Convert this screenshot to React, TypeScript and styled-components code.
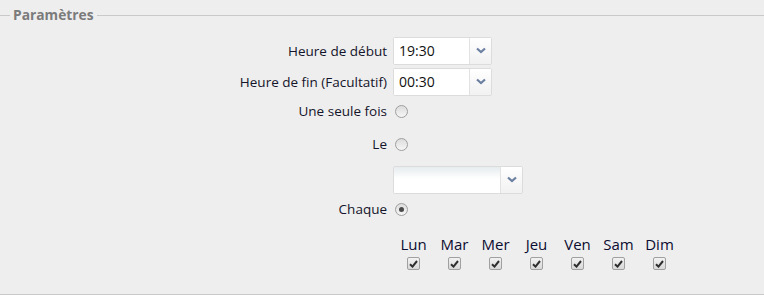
import styled, { createGlobalStyle } from "styled-components";

const GlobalStyle = createGlobalStyle`
  html, body {
    margin: 0;
    padding: 0;
    background: #eeeeee;
    font-family: "Open Sans", "Liberation Sans", Arial, sans-serif;
  }
`;

const days = ["Lun", "Mar", "Mer", "Jeu", "Ven", "Sam", "Dim"];

function Chevron() {
  return (
    <svg width="10" height="7" viewBox="0 0 10 7">
      <path d="M1 1.5 L5 5 L9 1.5" fill="none" stroke="#6b7fa0" strokeWidth="2.2" />
    </svg>
  );
}

function Check() {
  return (
    <svg width="9" height="8" viewBox="0 0 9 8">
      <path d="M1 4.2 L3.5 6.6 L8 1" fill="none" stroke="#2e2e2e" strokeWidth="2" />
    </svg>
  );
}

function Combo(prop: { value?: string; $w: number; $blank?: boolean }) {
  return (
    <ComboBox $w={prop.$w}>
      <ComboInput $blank={prop.$blank}>{prop.value}</ComboInput>
      <ComboButton>
        <Chevron />
      </ComboButton>
    </ComboBox>
  );
}

export default function App() {
  return (
    <>
      <GlobalStyle />
      <Fieldset>
        <Legend>Paramètres</Legend>
        <Form>
          <Row $h={31}>
            <Label>Heure de début</Label>
            <Combo value="19:30" $w={99} />
          </Row>
          <Row $h={31}>
            <Label>Heure de fin (Facultatif)</Label>
            <Combo value="00:30" $w={99} />
          </Row>
          <Row $h={28}>
            <Label>Une seule fois</Label>
            <Radio />
          </Row>
          <Row $h={38}>
            <Label>Le</Label>
            <Radio />
          </Row>
          <Row $h={33}>
            <Label />
            <Combo $w={130} $blank />
          </Row>
          <Row $h={26}>
            <Label>Chaque</Label>
            <Radio $checked />
          </Row>
          <Row $h={60}>
            <Label />
            <Days>
              {days.map((d) => (
                <Day key={d}>
                  <DayName>{d}</DayName>
                  <CheckBox>
                    <Check />
                  </CheckBox>
                </Day>
              ))}
            </Days>
          </Row>
        </Form>
      </Fieldset>
    </>
  );
}

const Fieldset = styled.fieldset`
  margin: 7px 0 0 0;
  padding: 0 10px 0 10px;
  border: none;
  border-top: 1px solid #c9c9c9;
  border-bottom: 1px solid #c9c9c9;
  height: 288px;
  box-sizing: border-box;
`;

const Legend = styled.legend`
  padding: 0 3px;
  font-size: 13.8px;
  line-height: 16px;
  font-weight: bold;
  color: #7b7b7b;
`;

const Form = styled.div`
  display: flex;
  flex-direction: column;
  padding-top: 12px;
`;

const Row = styled.div<{ $h: number }>`
  display: flex;
  align-items: center;
  height: ${(p) => p.$h}px;
  column-gap: 6px;
`;

const Label = styled.div`
  width: 377px;
  flex: none;
  text-align: right;
  font-size: 13.5px;
  color: #14142a;
`;

const ComboBox = styled.div<{ $w: number }>`
  display: flex;
  width: ${(p) => p.$w}px;
  height: 28px;
  box-sizing: border-box;
  border: 1px solid #dcdcdc;
  border-radius: 2px;
  background: #fff;
`;

const ComboInput = styled.div<{ $blank?: boolean }>`
  flex: 1;
  display: flex;
  align-items: center;
  padding-left: 5px;
  font-size: 14px;
  color: #111;
  background: ${(p) =>
    p.$blank ? "linear-gradient(#e6ecee, #ffffff 45%)" : "#ffffff"};
`;

const ComboButton = styled.div`
  width: 21px;
  display: flex;
  align-items: center;
  justify-content: center;
  border-left: 1px solid #e2e2e2;
  background: linear-gradient(#ffffff, #f1f1f1);
`;

const Radio = styled.div<{ $checked?: boolean }>`
  width: 13px;
  height: 13px;
  box-sizing: border-box;
  border-radius: 50%;
  border: 1px solid #9e9e9e;
  background: linear-gradient(#dcdcdc, #f6f6f6);
  display: flex;
  align-items: center;
  justify-content: center;
  margin-left: 2px;

  &::after {
    content: "";
    display: ${(p) => (p.$checked ? "block" : "none")};
    width: 5px;
    height: 5px;
    border-radius: 50%;
    background: #4a4a4a;
  }
`;

const Days = styled.div`
  display: flex;
  align-self: flex-start;
  padding-top: 13px;
`;

const Day = styled.div`
  width: 41px;
  display: flex;
  flex-direction: column;
  align-items: center;
  row-gap: 4px;
`;

const DayName = styled.div`
  font-size: 15px;
  line-height: 18px;
  color: #0c0c30;
`;

const CheckBox = styled.div`
  width: 13px;
  height: 13px;
  box-sizing: border-box;
  border: 1px solid #a0a0a0;
  border-radius: 2px;
  background: linear-gradient(#f2f2f2, #d8d8d8);
  display: flex;
  align-items: center;
  justify-content: center;
`;
